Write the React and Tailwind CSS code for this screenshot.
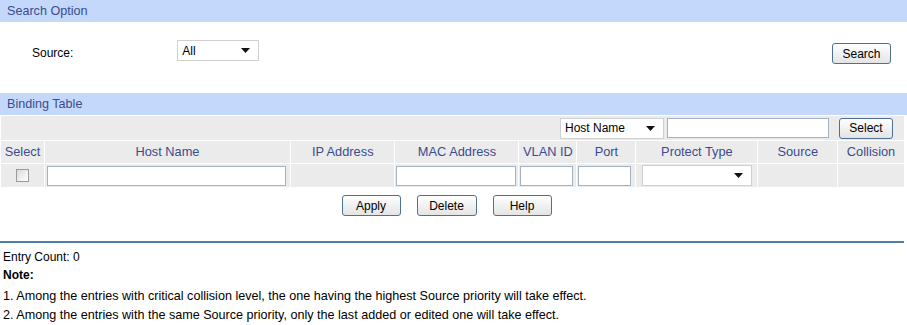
import React from 'react';

const Btn = ({ children, className = '' }) => (
  <button
    className={`h-[21px] rounded-[3px] border border-[#4d7096] bg-gradient-to-b from-white to-[#e4e4e4] text-[12px] text-black leading-none ${className}`}
  >
    {children}
  </button>
);

const Caret = () => (
  <svg width="9" height="5" viewBox="0 0 9 5" className="shrink-0">
    <path d="M0 0h9L4.5 5z" fill="#111" />
  </svg>
);

const Sel = ({ label, className = '' }) => (
  <div
    className={`flex h-[21px] items-center justify-between border border-[#cfcfcf] bg-white pl-[4px] pr-[8px] text-[12px] text-black ${className}`}
  >
    <span>{label}</span>
    <Caret />
  </div>
);

const Field = ({ className = '' }) => (
  <div className={`h-[20px] border border-[#a4b3c2] bg-white ${className}`} />
);

const SectionHead = ({ title }) => (
  <div className="flex h-[22px] items-center bg-[#c4d8fc] pl-[7px] text-[12.6px] text-[#3b4b8e]">
    {title}
  </div>
);

const cols = [
  ['Select', 'w-[43px]'],
  ['Host Name', 'w-[245px]'],
  ['IP Address', 'w-[104px]'],
  ['MAC Address', 'w-[123px]'],
  ['VLAN ID', 'w-[57px]'],
  ['Port', 'w-[58px]'],
  ['Protect Type', 'w-[121px]'],
  ['Source', 'w-[79px]'],
  ['Collision', 'w-[66px]'],
];

export default function App() {
  return (
    <div className="h-[325px] w-[907px] bg-white font-['Liberation_Sans',Arial,sans-serif] text-[12px] text-black">
      <SectionHead title="Search Option" />
      <div className="flex h-[71px] items-start">
        <span className="ml-[32px] mt-[22px]">Source:</span>
        <Sel label="All" className="ml-[104px] mt-[18px] w-[82px]" />
        <Btn className="ml-auto mr-[16px] mt-[21px] w-[59px]">Search</Btn>
      </div>

      <SectionHead title="Binding Table" />
      <table className="w-[905px] border-separate border-spacing-[1px] bg-white">
        <tbody>
          <tr>
            <td colSpan={9} className="h-[24px] bg-[#ebebeb]">
              <div className="flex items-center justify-end pr-[11px]">
                <Sel label="Host Name" className="w-[104px]" />
                <Field className="ml-[3px] w-[162px]" />
                <Btn className="ml-[10px] w-[54px]">Select</Btn>
              </div>
            </td>
          </tr>
          <tr>
            {cols.map(([c, w]) => (
              <td
                key={c}
                className={`h-[22px] bg-[#ebebeb] text-center text-[12.8px] text-[#3b4b8e] ${w}`}
              >
                {c}
              </td>
            ))}
          </tr>
          <tr>
            <td className="h-[23px] bg-[#ebebeb]">
              <div className="flex justify-center">
                <div className="h-[13px] w-[13px] border border-[#9a9a9a] bg-gradient-to-br from-[#dcdcdc] to-white" />
              </div>
            </td>
            <td className="bg-[#ebebeb] px-[2px]">
              <Field className="w-[239px]" />
            </td>
            <td className="bg-[#ebebeb]" />
            <td className="bg-[#ebebeb] px-[1px]">
              <Field className="w-[120px]" />
            </td>
            <td className="bg-[#ebebeb] px-[1px]">
              <Field className="w-[53px]" />
            </td>
            <td className="bg-[#ebebeb] px-[1px]">
              <Field className="w-[53px]" />
            </td>
            <td className="bg-[#ebebeb] pl-[6px]">
              <Sel label="" className="w-[110px] border-[#c8c8c8] pr-[6px]" />
            </td>
            <td className="bg-[#ebebeb]" />
            <td className="bg-[#ebebeb]" />
          </tr>
        </tbody>
      </table>

      <div className="mt-[7px] flex justify-center gap-[16px] pr-[14px]">
        <Btn className="w-[59px]">Apply</Btn>
        <Btn className="w-[60px]">Delete</Btn>
        <Btn className="w-[59px]">Help</Btn>
      </div>

      <div className="mt-[25px] h-[2px] w-[904px] bg-[#4d7fa8]" />

      <div className="pl-[3px] pt-[5px]">
        <div className="leading-[18px]">Entry Count: 0</div>
        <div className="font-bold leading-[18px]">Note:</div>
        <div className="mt-[3px] text-[12.6px] leading-[19px]">
          1. Among the entries with critical collision level, the one having the highest Source priority will take effect.
        </div>
        <div className="text-[12.6px] leading-[19px]">
          2. Among the entries with the same Source priority, only the last added or edited one will take effect.
        </div>
      </div>
    </div>
  );
}
